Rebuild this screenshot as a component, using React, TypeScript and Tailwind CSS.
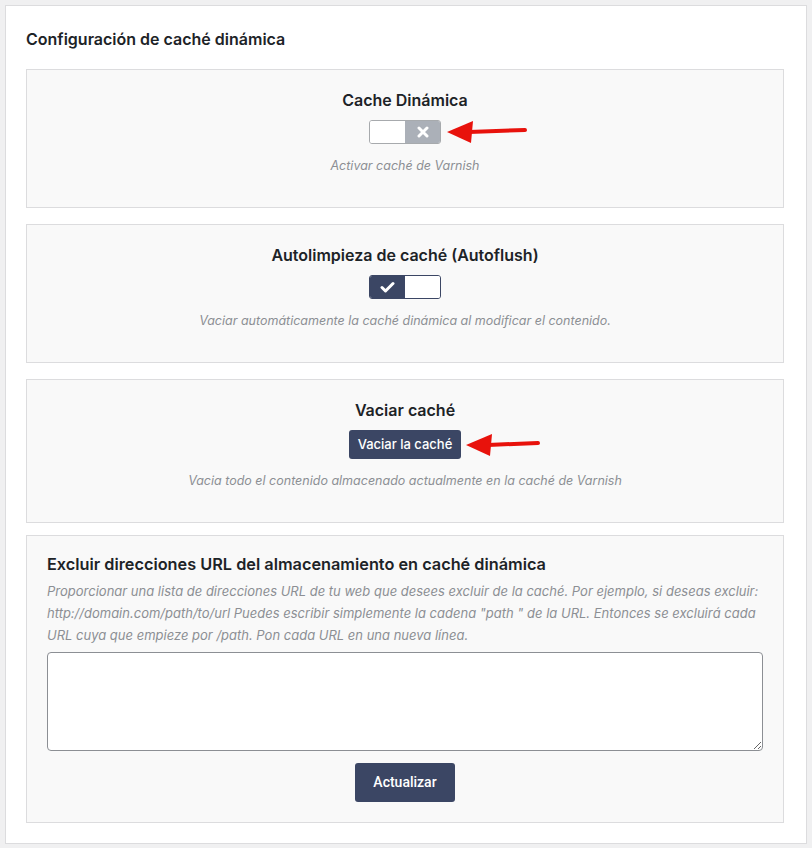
import React from "react";

const navy = "bg-[#3b4664]";

function Arrow({ w }: { w: number }) {
  return (
    <svg width={w} height="24" viewBox={`0 0 ${w} 24`} className="absolute top-1/2 -translate-y-1/2">
      <line x1="22" y1="12" x2={w - 2} y2="10" stroke="#e8120c" strokeWidth="4" strokeLinecap="round" />
      <polygon points="0,12 26,1 24,23" fill="#e8120c" />
    </svg>
  );
}

function ToggleOff() {
  return (
    <div className="relative flex h-[24px] w-[72px] overflow-hidden rounded-[3px] border border-[#a7aaad]">
      <div className="w-1/2 bg-white" />
      <div className="flex w-1/2 items-center justify-center bg-[#abb0b8]">
        <svg width="12" height="12" viewBox="0 0 12 12">
          <path d="M2 2 L10 10 M10 2 L2 10" stroke="#fff" strokeWidth="3" strokeLinecap="round" />
        </svg>
      </div>
    </div>
  );
}

function ToggleOn() {
  return (
    <div className="flex h-[24px] w-[72px] overflow-hidden rounded-[3px] border border-[#3b4664]">
      <div className={`flex w-1/2 items-center justify-center ${navy}`}>
        <svg width="15" height="12" viewBox="0 0 15 12">
          <path d="M2 6.5 L5.5 10 L13 2.5" fill="none" stroke="#fff" strokeWidth="3" strokeLinecap="round" strokeLinejoin="round" />
        </svg>
      </div>
      <div className="w-1/2 bg-white" />
    </div>
  );
}

function Section({ title, desc, children, arrow }: { title: string; desc: string; children: React.ReactNode; arrow?: React.ReactNode }) {
  return (
    <div className="flex flex-col items-center border border-[#dcdcde] bg-[#f9f9f9] pt-[20px] pb-[31px]">
      <h3 className="text-[16px] font-semibold leading-[20px] text-[#1d2327]">{title}</h3>
      <div className="relative mt-[10px]">
        {children}
        {arrow}
      </div>
      <p className="mt-[12px] text-[12.5px] italic leading-[20px] text-[#8c8f94]">{desc}</p>
    </div>
  );
}

export default function App() {
  return (
    <div className="min-h-[848px] bg-[#f0f0f1] p-[5px] font-['Inter','Liberation_Sans',sans-serif]">
      <div className="border border-[#dcdcde] bg-white pt-[23px] pb-[20px] pl-[20px] pr-[22px]">
        <h2 className="text-[16px] font-semibold leading-[20px] text-[#1d2327]">Configuración de caché dinámica</h2>
        <div className="mt-[20px] flex flex-col">
          <Section
            title="Cache Dinámica"
            desc="Activar caché de Varnish"
            arrow={
              <div className="absolute top-0 left-[78px] h-full">
                <Arrow w={80} />
              </div>
            }
          >
            <ToggleOff />
          </Section>
          <div className="mt-[16px]">
            <Section title="Autolimpieza de caché (Autoflush)" desc="Vaciar automáticamente la caché dinámica al modificar el contenido.">
              <ToggleOn />
            </Section>
          </div>
          <div className="mt-[16px]">
            <Section
              title="Vaciar caché"
              desc="Vacia todo el contenido almacenado actualmente en la caché de Varnish"
              arrow={
                <div className="absolute top-0 left-[117px] h-full">
                  <Arrow w={74} />
                </div>
              }
            >
              <button className={`h-[29px] w-[112px] rounded-[3px] text-[13px] font-medium text-white ${navy}`}>Vaciar la caché</button>
            </Section>
          </div>
          <div className="mt-[12px] border border-[#dcdcde] bg-[#f9f9f9] px-[20px] pt-[16px] pb-[20px]">
            <h3 className="text-[16.3px] font-semibold leading-[24px] text-[#1d2327]">
              Excluir direcciones URL del almacenamiento en caché dinámica
            </h3>
            <p className="mt-[4px] text-[13px] italic leading-[22px] text-[#8c8f94]">
              Proporcionar una lista de direcciones URL de tu web que desees excluir de la caché. Por ejemplo, si deseas excluir: http://domain.com/path/to/url Puedes escribir simplemente la cadena "path " de la URL. Entonces se excluirá cada URL cuya que empieze por /path. Pon cada URL en una nueva línea.
            </p>
            <textarea className="mt-[6px] block h-[99px] w-full rounded-[4px] border border-[#8c8f94] bg-white" />
            <div className="mt-[12px] flex justify-center">
              <button className={`h-[39px] w-[100px] rounded-[3px] font-['Roboto',sans-serif] text-[14px] font-medium text-white ${navy}`}>
                Actualizar
              </button>
            </div>
          </div>
        </div>
      </div>
    </div>
  );
}
